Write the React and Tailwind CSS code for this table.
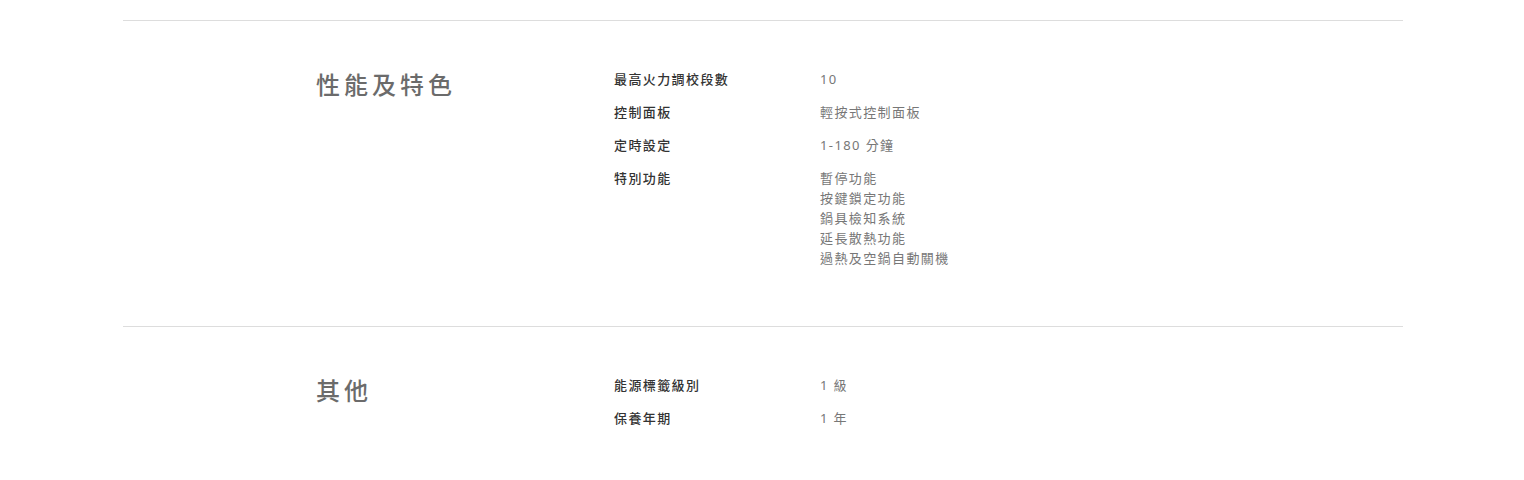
const sections = [
  {
    title: "性能及特色",
    rows: [
      { label: "最高火力調校段數", value: ["10"] },
      { label: "控制面板", value: ["輕按式控制面板"] },
      { label: "定時設定", value: ["1-180 分鐘"] },
      {
        label: "特別功能",
        value: ["暫停功能", "按鍵鎖定功能", "鍋具檢知系統", "延長散熱功能", "過熱及空鍋自動關機"],
      },
    ],
  },
  {
    title: "其他",
    rows: [
      { label: "能源標籤級別", value: ["1 級"] },
      { label: "保養年期", value: ["1 年"] },
    ],
  },
];

export default function App() {
  return (
    <div
      className="bg-white min-h-screen pt-[20px]"
      style={{ fontFamily: '"Noto Sans", "Noto Sans CJK TC", sans-serif' }}
    >
      <div className="ml-[123px] w-[1280px]">
        {sections.map((section) => (
          <div key={section.title} className="border-t border-[#dddddd] pt-[48px] pb-[58px]">
            <div className="flex">
              <div className="w-[298px] pl-[193px] shrink-0 box-content">
                <h2 className="text-[24px] leading-[32px] font-medium text-[#6b6b6b] tracking-[4px] whitespace-nowrap">
                  {section.title}
                </h2>
              </div>
              <div className="flex flex-col gap-[13px]">
                {section.rows.map((row) => (
                  <div key={row.label} className="flex text-[13px] leading-[20px] tracking-[1.4px]">
                    <div className="w-[206px] font-medium text-[#333333]">{row.label}</div>
                    <div className="text-[#777777]">
                      {row.value.map((v) => (
                        <div key={v}>{v}</div>
                      ))}
                    </div>
                  </div>
                ))}
              </div>
            </div>
          </div>
        ))}
      </div>
    </div>
  );
}
